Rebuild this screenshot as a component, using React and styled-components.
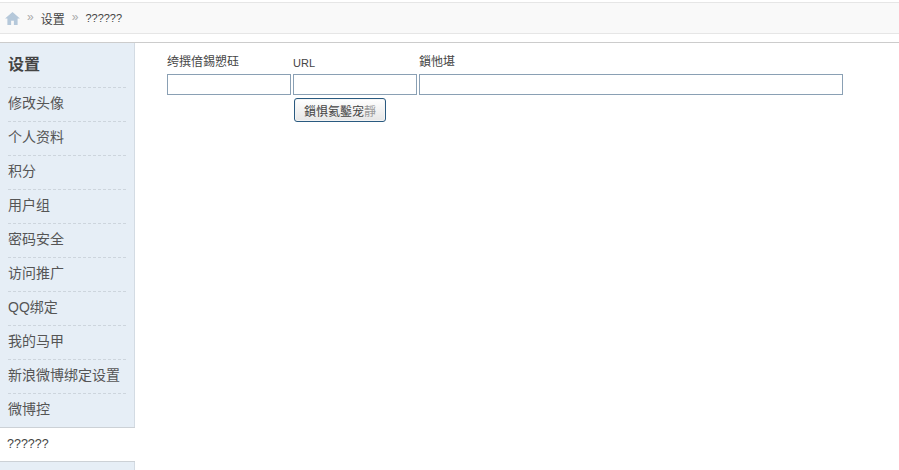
import React from 'react';
import styled, { createGlobalStyle } from 'styled-components';

const Global = createGlobalStyle`
html, body {
    margin: 0;
    padding: 0;
    background: #fff;
    overflow: hidden;
}
body {
    font-family: "Liberation Sans", "Noto Sans CJK SC", sans-serif;
    font-size: 12px;
    color: #333;
}
`;

const Page = styled.div`
width: 899px;
height: 470px;
overflow: hidden;
padding-top: 2px;
box-sizing: border-box;
`;

const Crumbs = styled.div`
height: 30px;
display: flex;
align-items: center;
padding-left: 5px;
background: #f9f9f9;
border-top: 1px solid #e6e6e6;
border-bottom: 1px solid #e6e6e6;
`;

const Sep = styled.span`
color: #aaa;
margin: 0 7px 0 7px;
font-size: 12px;
position: relative;
top: -1px;
`;

const Crumb = styled.span`
font-size: ${({ $small }) => ($small ? '11px' : '12px')};
color: #444;
`;

const Body = styled.div`
display: flex;
margin-top: 8px;
border-top: 1px solid #ccc;
`;

const Side = styled.div`
width: 134px;
flex: none;
height: 428px;
background: #e6eef6;
border-right: 1px solid #d3dbe3;
`;

const SideTitle = styled.h2`
margin: 0;
height: 44px;
line-height: 44px;
padding-left: 8px;
font-size: 16px;
color: #444;
`;

const SideItem = styled.div`
height: 33px;
line-height: 31px;
margin: 0 8px;
border-top: 1px dashed #cdd5dd;
font-size: 14px;
color: #555;
`;

const Current = styled.div`
height: 33px;
line-height: 32px;
width: 128px;
padding-left: 7px;
background: #fff;
border-top: 1px solid #ccd1d6;
border-bottom: 1px solid #ccd1d6;
font-size: 12.5px;
color: #444;
`;

const Main = styled.div`
padding: 11px 0 0 32px;
`;

const Fields = styled.div`
display: grid;
grid-template-columns: 124px 124px 424px;
column-gap: 2px;
`;

const Field = styled.label`
display: flex;
flex-direction: column;
`;

const Label = styled.span`
height: ${({ $latin }) => ($latin ? '19px' : '20px')};
padding-top: ${({ $latin }) => ($latin ? '1px' : '0')};
font-size: ${({ $latin }) => ($latin ? '11px' : '12px')};
line-height: 16px;
color: #444;
`;

const Input = styled.input`
box-sizing: border-box;
width: 100%;
height: 21px;
border: 1px solid #8aa0b4;
background: #fff;
padding: 0 2px;
outline: none;
`;

const Actions = styled.div`
padding: 3px 0 0 127px;
`;

const Button = styled.button`
width: 92px;
height: 24px;
padding: 0;
font-family: inherit;
font-size: 12px;
color: #444;
background: linear-gradient(#fff, #e6e6e6);
border: 1px solid #2a5a80;
border-radius: 3px;
box-shadow: inset 0 0 0 1px #f4f4f4;
`;

const Faded = styled.span`
color: #999;
`;

const HomeIcon = () => (
    <svg width="15" height="13" viewBox="0 0 16 14">
        <path d="M8 0 L16 7 H13.5 V14 H9.5 V9.5 H6.5 V14 H2.5 V7 H0 Z" fill="#b5c8da" />
    </svg>
);

const items = ['修改头像', '个人资料', '积分', '用户组', '密码安全', '访问推广', 'QQ绑定', '我的马甲', '新浪微博绑定设置', '微博控'];

export default function App() {
    return (
        <Page>
            <Global />
            <Crumbs>
                <HomeIcon />
                <Sep>»</Sep>
                <Crumb>设置</Crumb>
                <Sep>»</Sep>
                <Crumb $small>??????</Crumb>
            </Crumbs>
            <Body>
                <Side>
                    <SideTitle>设置</SideTitle>
                    {items.map((item) => <SideItem key={item}>{item}</SideItem>)}
                    <Current>??????</Current>
                </Side>
                <Main>
                    <Fields>
                        <Field><Label>绔撰偣錫愬砡</Label><Input /></Field>
                        <Field><Label $latin>URL</Label><Input /></Field>
                        <Field><Label>鎻忚堪</Label><Input /></Field>
                    </Fields>
                    <Actions><Button>鎻惧氦鑿宠<Faded>靜</Faded></Button></Actions>
                </Main>
            </Body>
        </Page>
    );
}
